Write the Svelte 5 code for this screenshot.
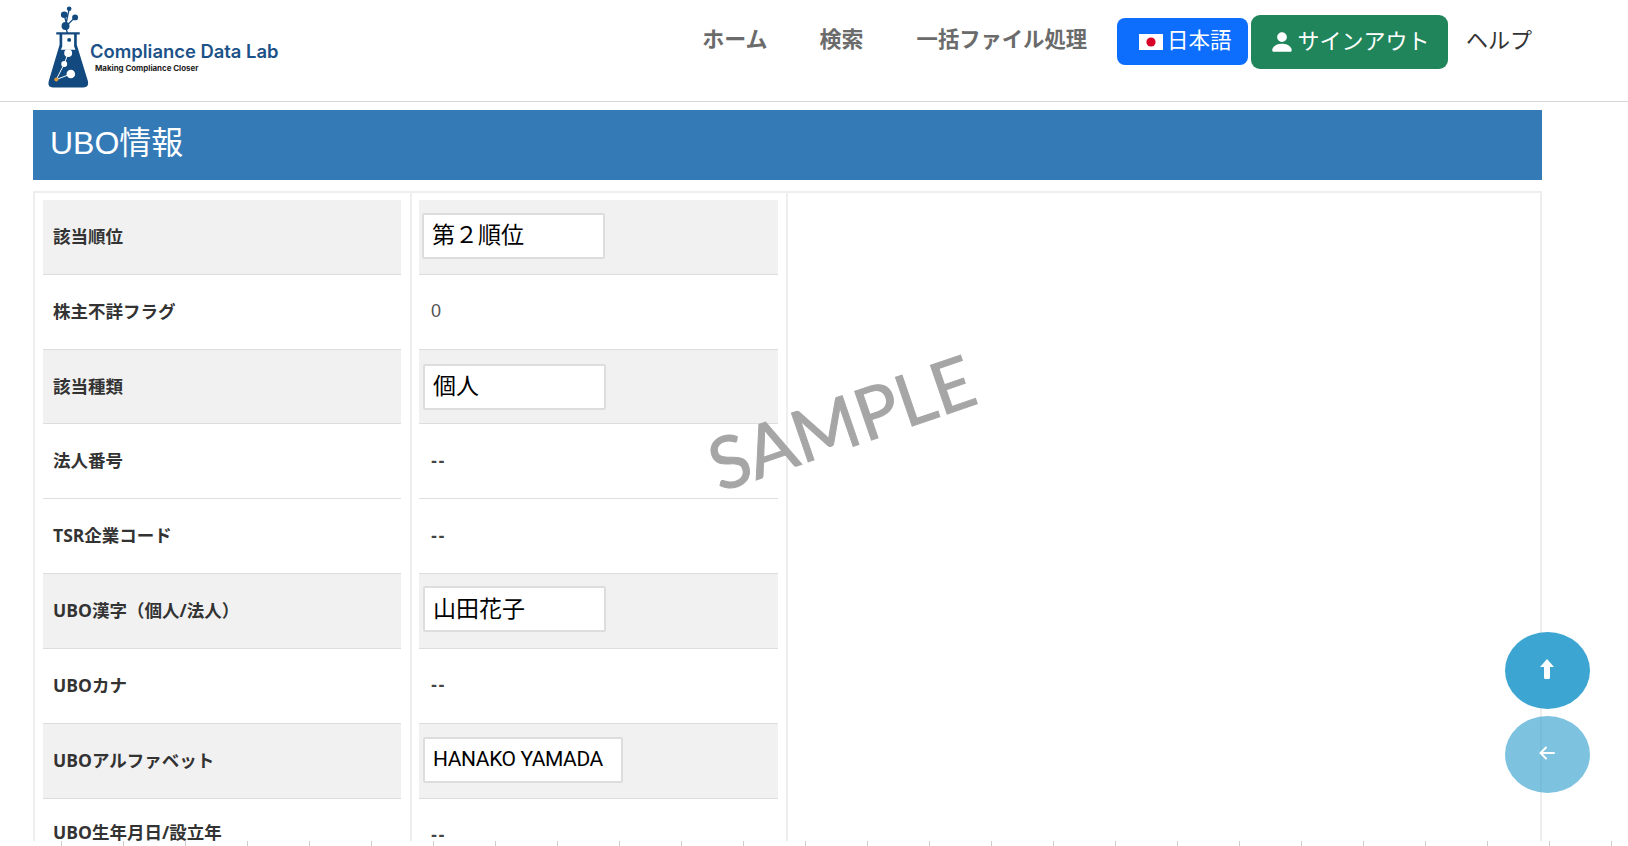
<script>
  const rows = [
    { label: '該当順位', input: '第２順位', kind: 'rank' },
    { label: '株主不詳フラグ', value: '0' },
    { label: '該当種類', input: '個人', kind: 'type' },
    { label: '法人番号', value: '--' },
    { label: 'TSR企業コード', value: '--' },
    { label: 'UBO漢字（個人/法人）', input: '山田花子', kind: 'kanji' },
    { label: 'UBOカナ', value: '--' },
    { label: 'UBOアルファベット', input: 'HANAKO YAMADA', kind: 'alpha' },
    { label: 'UBO生年月日/設立年', value: '--' }
  ];
</script>

<div class="page">
  <header class="topbar">
    <a class="logo" href="#top">
      <svg class="flask" viewBox="140 10 130 260" aria-hidden="true">
        <g stroke="#124a80" stroke-width="4" fill="none">
          <path d="M207 26 L196 78 M192 44 L198 68 M225 52 L198 78 M196 78 L207 120" />
        </g>
        <g fill="#124a80">
          <circle cx="207" cy="26" r="7" />
          <circle cx="192" cy="44" r="10" />
          <circle cx="225" cy="52" r="9" />
          <circle cx="196" cy="78" r="12" />
          <path d="M168 97 H239 V104 H230 V135 L264 246 Q267 264 250 264 H158 Q141 264 145 246 L178 135 V104 H168 Z" />
        </g>
        <path d="M186 104 H222 V140 L226 150 H182 L186 140 Z" fill="#fff" />
        <circle cx="207" cy="120" r="6" fill="#124a80" />
        <g stroke="#fff" stroke-width="3" fill="none">
          <path d="M168 240 L192 193 L204 160 M168 240 L212 223" />
        </g>
        <g fill="#fff">
          <circle cx="204" cy="160" r="12" />
          <circle cx="192" cy="193" r="9" />
          <circle cx="212" cy="223" r="13" />
        </g>
        <circle cx="168" cy="240" r="6" fill="#e39a3b" />
      </svg>
      <span class="logo-text">
        <span class="logo-name">Compliance Data Lab</span>
        <span class="logo-tag">Making Compliance Closer</span>
      </span>
    </a>

    <nav class="nav">
      <a class="nav-link home" href="#top">ホーム</a>
      <a class="nav-link search" href="#top">検索</a>
      <a class="nav-link bulk" href="#top">一括ファイル処理</a>
      <button class="btn lang">
        <svg class="flag" viewBox="0 0 24 16" aria-hidden="true">
          <rect width="24" height="16" fill="#fff" />
          <circle cx="12" cy="8" r="4.6" fill="#d80027" />
        </svg>
        <span class="btn-text">日本語</span>
      </button>
      <button class="btn signout">
        <svg class="person" viewBox="0 0 16 16" aria-hidden="true">
          <path fill="#fff" d="M3 14s-1 0-1-1 1-4 6-4 6 3 6 4-1 1-1 1H3Zm5-6a3 3 0 1 0 0-6 3 3 0 0 0 0 6Z" />
        </svg>
        <span class="btn-text">サインアウト</span>
      </button>
      <a class="help" href="#top">ヘルプ</a>
    </nav>
  </header>

  <main class="content">
    <h1 class="heading">UBO情報</h1>
    <div class="columns">
      <div class="col first">
        {#each rows as row}
          <div class="cell label" class:shaded={row.input}>{row.label}</div>
        {/each}
      </div>
      <div class="col">
        {#each rows as row}
          <div class="cell val" class:shaded={row.input} class:dash={row.value === '--'}>
            {#if row.input}
              <span class="field {row.kind}">{row.input}</span>
            {:else}
              {row.value}
            {/if}
          </div>
        {/each}
      </div>
      <div class="col rest"></div>
    </div>
  </main>

  <div class="ruler"></div>

  <div class="sample">SAMPLE</div>

  <div class="floats">
    <button class="float up" aria-label="ページ上部へ">
      <svg viewBox="0 0 14 20" width="14" height="20" aria-hidden="true">
        <path fill="#fff" d="M7 0 L14 8 H10 V18.5 Q10 20 8.5 20 H5.5 Q4 20 4 18.5 V8 H0 Z" />
      </svg>
    </button>
    <button class="float back" aria-label="戻る">
      <svg viewBox="0 0 16 14" width="16" height="14" aria-hidden="true">
        <path fill="none" stroke="#fff" stroke-width="2" stroke-linecap="round" stroke-linejoin="round" d="M7 1.5 L1.5 7 L7 12.5 M1.5 7 H15" />
      </svg>
    </button>
  </div>
</div>

<style>
  :global(body) {
    margin: 0;
    background: #fff;
    font-family: "Liberation Sans", "Noto Sans CJK JP", sans-serif;
    color: #333;
  }

  .page {
    position: relative;
    height: 846px;
    overflow: hidden;
    display: flex;
    flex-direction: column;
  }

  .topbar {
    height: 101px;
    flex: none;
    border-bottom: 1px solid #d8d8d8;
    display: flex;
    justify-content: space-between;
  }

  .logo {
    display: flex;
    align-items: flex-start;
    margin-left: 47px;
    padding-top: 3px;
    text-decoration: none;
  }

  .flask {
    width: 43px;
    height: 87px;
  }

  .logo-text {
    display: flex;
    flex-direction: column;
    margin-top: 37px;
  }

  .logo-name {
    font-family: "Inter", sans-serif;
    font-weight: 600;
    font-size: 18.4px;
    line-height: 22px;
    color: #1c5288;
    white-space: nowrap;
  }

  .logo-tag {
    font-family: "Inter", sans-serif;
    font-weight: 700;
    font-size: 7.9px;
    line-height: 10px;
    color: #222;
    margin: 1px 0 0 5px;
    white-space: nowrap;
  }

  .nav {
    display: flex;
    align-items: flex-start;
    padding-right: 96px;
  }

  .nav-link {
    font-size: 22px;
    font-weight: 700;
    line-height: 30px;
    color: #6b6b6b;
    text-decoration: none;
    margin-top: 25px;
    white-space: nowrap;
  }

  .search {
    margin-left: 52px;
  }

  .bulk {
    font-size: 21.3px;
    margin-left: 53px;
    margin-right: 30px;
  }

  .btn {
    display: flex;
    align-items: center;
    justify-content: center;
    border: none;
    color: #fff;
    font-family: inherit;
    padding: 0;
    white-space: nowrap;
  }

  .btn-text {
    margin-top: -6px;
  }

  .lang {
    width: 131px;
    height: 47px;
    margin-top: 18px;
    background: #0d6efd;
    border-radius: 8px;
    justify-content: flex-start;
    padding-left: 22px;
    gap: 4px;
    font-size: 21.5px;
  }

  .flag {
    width: 24px;
    height: 16px;
  }

  .signout {
    width: 197px;
    height: 54px;
    margin: 15px 0 0 3px;
    background: #20855a;
    border-radius: 9px;
    gap: 2px;
    font-size: 22px;
  }

  .person {
    width: 26px;
    height: 26px;
    margin-top: -1px;
  }

  .help {
    margin: 26px 0 0 18px;
    font-size: 22px;
    line-height: 30px;
    color: #333;
    text-decoration: none;
    white-space: nowrap;
  }

  .content {
    flex: 1;
    min-height: 0;
    overflow: hidden;
    margin: 0 0 0 33px;
    padding-top: 8px;
    width: 1509px;
  }

  .heading {
    margin: 0;
    height: 70px;
    padding-left: 17px;
    background: #337ab7;
    color: #fff;
    font-size: 32px;
    font-weight: 400;
    line-height: 66px;
  }

  .columns {
    display: grid;
    grid-template-columns: 377px 376px 1fr;
    margin-top: 11px;
    border-top: 2px solid #eee;
    border-right: 2px solid #eee;
  }

  .col {
    box-sizing: border-box;
    border-left: 2px solid #eee;
    padding: 7px 8px 0 7px;
    display: grid;
    grid-auto-rows: 74.83px;
  }

  .first {
    padding-left: 8px;
    padding-right: 9px;
  }

  .rest {
    padding: 0;
  }

  .cell {
    box-sizing: border-box;
    display: flex;
    align-items: center;
    border-bottom: 1px solid #ddd;
    padding-left: 12px;
    font-size: 17px;
    white-space: nowrap;
  }

  .shaded {
    background: #f1f1f1;
  }

  .label {
    font-family: "Open Sans", "Noto Sans CJK JP", sans-serif;
    font-size: 17.5px;
    font-weight: 700;
    color: #333;
    padding-left: 10px;
    padding-bottom: 3px;
  }

  .label:last-child {
    padding-bottom: 8px;
  }

  .val {
    color: #555;
    font-size: 18px;
  }

  .dash {
    font-weight: 700;
    letter-spacing: 1.5px;
    color: #444;
  }

  .field {
    box-sizing: border-box;
    display: flex;
    align-items: center;
    height: 46px;
    padding: 0 0 5px 8px;
    background: #fff;
    border: 2px solid #ddd;
    border-radius: 2px;
    color: #000;
    font-size: 23px;
  }

  .rank {
    width: 183px;
    margin-left: -9px;
    margin-top: -2px;
  }

  .type {
    width: 183px;
    margin-left: -8px;
  }

  .kanji {
    width: 183px;
    margin-left: -8px;
    margin-top: -4px;
  }

  .alpha {
    width: 200px;
    margin-left: -8px;
    margin-top: -1px;
    font-family: "Roboto", "Noto Sans CJK JP", sans-serif;
    font-size: 21px;
    letter-spacing: -0.4px;
    padding-bottom: 2px;
  }

  .ruler {
    flex: none;
    height: 5px;
    background: repeating-linear-gradient(to right, #fff 0 61px, #ccc 61px 62px, #fff 62px 62px);
  }

  .sample {
    position: absolute;
    left: 841px;
    top: 421px;
    transform: translate(-50%, -50%) rotate(-19deg);
    font-family: "Lato", sans-serif;
    font-size: 72px;
    line-height: 1;
    color: #a6a6a6;
    -webkit-text-stroke: 1px #a6a6a6;
    white-space: nowrap;
  }

  .floats {
    position: absolute;
    left: 1505px;
    top: 632px;
    display: flex;
    flex-direction: column;
    gap: 7px;
  }

  .float {
    width: 85px;
    height: 77px;
    padding: 0 1px 4px 0;
    border: none;
    border-radius: 50%;
    display: flex;
    align-items: center;
    justify-content: center;
  }

  .up {
    background: rgba(56, 163, 208, 0.98);
  }

  .back {
    background: rgba(56, 163, 208, 0.65);
  }
</style>
